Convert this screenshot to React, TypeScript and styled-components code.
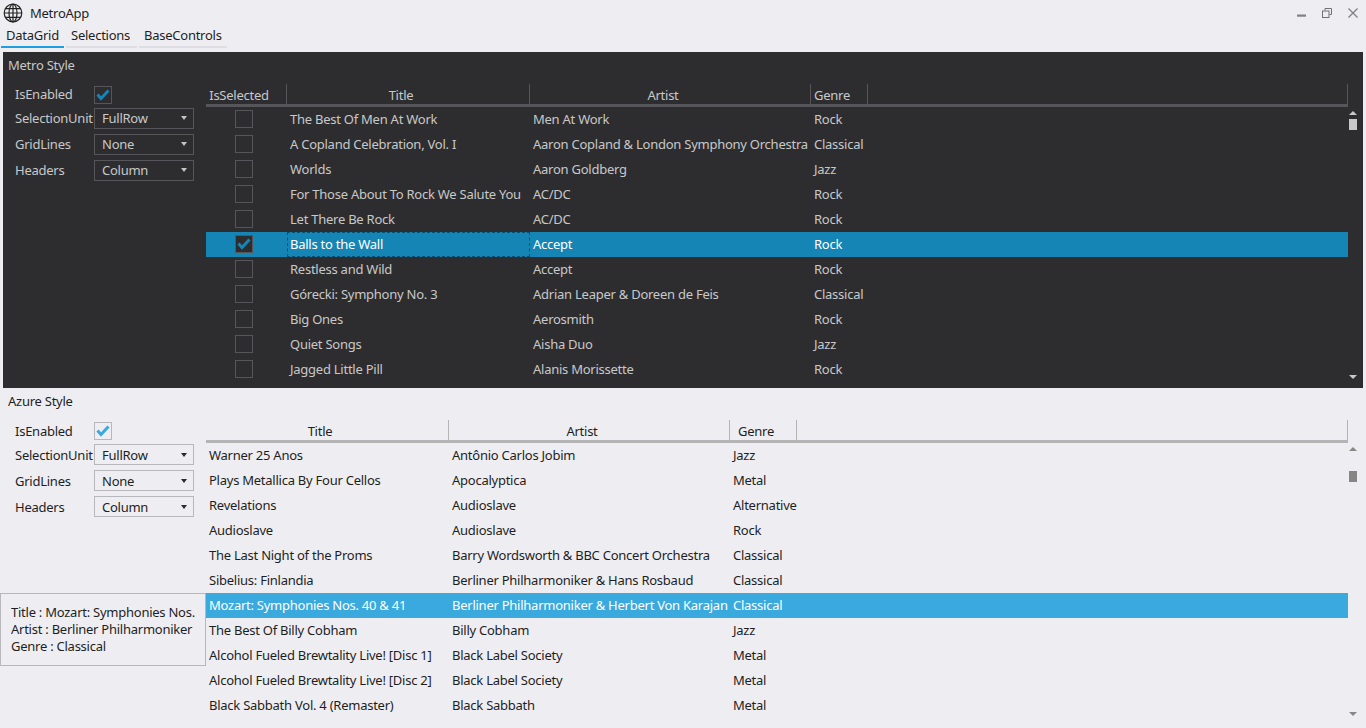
import React from "react";
import styled, { createGlobalStyle } from "styled-components";

const Global = createGlobalStyle`
  html, body { margin: 0; padding: 0; background: #eeeef2; }
  body { font-family: "Noto Sans", "Noto Sans CJK SC", sans-serif; font-size: 13px; letter-spacing: -0.25px; }
  * { box-sizing: border-box; }
`;

const Page = styled.div`
  width: 1366px; height: 728px; overflow: hidden; position: relative;
  background: #eeeef2; color: #1e1e1e; display: flex; flex-direction: column;
`;
const TitleBar = styled.div`height: 26px; display: flex; align-items: center; padding-left: 3px;`;
const AppName = styled.span`margin-left: 7px; line-height: 26px;`;
const WindowButtons = styled.div`margin-left: auto; display: flex; align-items: center; margin-right: 8px; gap: 16px;`;
const TabStrip = styled.div`height: 22px; display: flex; padding-left: 1px; gap: 2px;`;
const Tab = styled.div<{ $active?: boolean; $w: number }>`
  width: ${p => p.$w}px; height: 22px; padding-left: 5px; line-height: 18px;
  border-bottom: 2px solid ${p => (p.$active ? "#1ba1e2" : "#dddde3")};
`;
const Content = styled.div`flex: 1; padding: 4px 3px 0; display: flex; flex-direction: column; min-height: 0;`;
const Panel = styled.section<{ $dark?: boolean; $h: number }>`
  height: ${p => p.$h}px; flex: none; overflow: hidden; display: flex; flex-direction: column;
  background: ${p => (p.$dark ? "#2d2d30" : "#eeeef2")};
  color: ${p => (p.$dark ? "#c8c8c8" : "#1e1e1e")};
`;
const Heading = styled.div`height: 32px; padding-left: 5px; line-height: 27px; flex: none;`;
const Body = styled.div`flex: 1; display: flex; min-height: 0;`;
const Sidebar = styled.div`width: 203px; flex: none; padding: 2px 0 0 12px; display: flex; flex-direction: column;`;
const CheckRow = styled.div`display: flex; align-items: center; height: 18px; margin-bottom: 4px;`;
const FormRow = styled.div`display: flex; align-items: center; height: 21px; margin-bottom: 5px;`;
const Label = styled.label<{ $dark?: boolean }>`
  width: 79px; flex: none; white-space: nowrap; padding-bottom: ${p => (p.$dark ? 2 : 0)}px;
`;
const Box = styled.span<{ $dark?: boolean; $fill?: string }>`
  width: 18px; height: 18px; flex: none; display: inline-flex; align-items: center; justify-content: center;
  border: 1px solid ${p => (p.$dark ? "#55555a" : "#b8b8bc")};
  background: ${p => p.$fill ?? "transparent"};
`;
const Combo = styled.div<{ $dark?: boolean }>`
  width: 100px; height: 21px; display: flex; align-items: center; justify-content: space-between;
  padding: 0 6px ${p => (p.$dark ? 2 : 0)}px 7px; border: 1px solid ${p => (p.$dark ? "#55555a" : "#b8b8bc")};
`;
const Caret = styled.span<{ $dark?: boolean }>`
  width: 0; height: 0; border-left: 3.5px solid transparent; border-right: 3.5px solid transparent;
  border-top: 4px solid ${p => (p.$dark ? "#c4c4c4" : "#2a2a2a")};
`;
const Grid = styled.div`width: 1142px; flex: none; display: flex; flex-direction: column; min-height: 0; overflow: hidden;`;
const HeaderRow = styled.div<{ $dark?: boolean }>`
  height: 23px; flex: none; display: flex; border-bottom: 3px solid ${p => (p.$dark ? "#55555a" : "#b4b4b4")};
  border-right: 1px solid ${p => (p.$dark ? "#55555a" : "#b4b4b4")};
`;
const HeaderCell = styled.div<{ $w: number; $dark?: boolean }>`
  width: ${p => p.$w}px; flex: none; text-align: center;
  padding: 3px 14px 0 0; line-height: 16px; white-space: nowrap;
  border-right: 1px solid ${p => (p.$dark ? "#55555a" : "#b4b4b4")};
`;
const Row = styled.div<{ $sel?: string }>`
  height: 25px; flex: none; display: flex; align-items: center;
  background: ${p => p.$sel ?? "transparent"};
  color: ${p => (p.$sel ? "#fff" : "inherit")};
`;
const CheckCell = styled.div`width: 81px; height: 25px; flex: none; display: flex; justify-content: center; padding: 3px 6px 0 0;`;
const Cell = styled.div<{ $w: number; $focus?: boolean }>`
  width: ${p => p.$w}px; height: 25px; line-height: 24px; flex: none; padding-left: 3px; overflow: hidden; white-space: nowrap;
  outline: ${p => (p.$focus ? "1px dashed #0b4f70" : "none")}; outline-offset: -1px;
`;
const ScrollBar = styled.div`
  width: 11px; flex: none; margin-left: 1px; display: flex; flex-direction: column; align-items: flex-start;
  padding: 27px 0 9px;
`;
const Thumb = styled.div<{ $dark?: boolean; $top: number }>`
  width: 8px; height: 11px; margin-top: ${p => p.$top}px; background: ${p => (p.$dark ? "#c8c8c8" : "#868686")};
`;
const ArrowUp = styled.div<{ $dark?: boolean }>`
  width: 0; height: 0; border-left: 4px solid transparent; border-right: 4px solid transparent;
  border-bottom: 4px solid ${p => (p.$dark ? "#c8c8c8" : "#868686")};
`;
const ArrowDown = styled.div<{ $dark?: boolean }>`
  width: 0; height: 0; margin-top: auto; border-left: 4px solid transparent; border-right: 4px solid transparent;
  border-top: 4px solid ${p => (p.$dark ? "#c8c8c8" : "#868686")};
`;
const Tooltip = styled.div`
  position: absolute; left: 0; top: 593px; width: 206px; height: 73px; background: #eeeef2;
  border: 1px solid #b8b8bc; padding: 10px 10px 0; line-height: 17px;
`;
const TipLine = styled.div`white-space: nowrap; overflow: hidden;`;

const Check = ({ color }: { color: string }) => (
  <svg width="14" height="12" viewBox="0 0 14 12"><path d="M1.5 5.5 L5 9.5 L12.5 1.5" fill="none" stroke={color} strokeWidth="3" /></svg>
);
const Globe = () => (
  <svg width="20" height="20" viewBox="0 0 20 20" fill="none" stroke="#222" strokeWidth="1.2">
    <circle cx="10" cy="10" r="8.8" /><ellipse cx="10" cy="10" rx="4" ry="8.8" />
    <path d="M10 1.2V18.8M1.2 10H18.8M2.4 5.6H17.6M2.4 14.4H17.6" />
  </svg>
);
const WinMin = () => <svg width="9" height="10" viewBox="0 0 9 10"><rect x="0" y="6.5" width="9" height="2.2" fill="#808084" /></svg>;
const WinRestore = () => (
  <svg width="10" height="10" viewBox="0 0 10 10" fill="none" stroke="#707074"><path d="M3 2.5V.5H9.5V6.5H7.5" /><rect x=".5" y="3" width="6.5" height="6.5" /></svg>
);
const WinClose = () => <svg width="10" height="10" viewBox="0 0 10 10" stroke="#808084" strokeWidth="1.3"><path d="M.5 .5L9.5 9.5M9.5 .5L.5 9.5" /></svg>;

type Album = [string, string, string];
const metro: Album[] = [
  ["The Best Of Men At Work", "Men At Work", "Rock"],
  ["A Copland Celebration, Vol. I", "Aaron Copland & London Symphony Orchestra", "Classical"],
  ["Worlds", "Aaron Goldberg", "Jazz"],
  ["For Those About To Rock We Salute You", "AC/DC", "Rock"],
  ["Let There Be Rock", "AC/DC", "Rock"],
  ["Balls to the Wall", "Accept", "Rock"],
  ["Restless and Wild", "Accept", "Rock"],
  ["Górecki: Symphony No. 3", "Adrian Leaper & Doreen de Feis", "Classical"],
  ["Big Ones", "Aerosmith", "Rock"],
  ["Quiet Songs", "Aisha Duo", "Jazz"],
  ["Jagged Little Pill", "Alanis Morissette", "Rock"],
];
const azure: Album[] = [
  ["Warner 25 Anos", "Antônio Carlos Jobim", "Jazz"],
  ["Plays Metallica By Four Cellos", "Apocalyptica", "Metal"],
  ["Revelations", "Audioslave", "Alternative"],
  ["Audioslave", "Audioslave", "Rock"],
  ["The Last Night of the Proms", "Barry Wordsworth & BBC Concert Orchestra", "Classical"],
  ["Sibelius: Finlandia", "Berliner Philharmoniker & Hans Rosbaud", "Classical"],
  ["Mozart: Symphonies Nos. 40 & 41", "Berliner Philharmoniker & Herbert Von Karajan", "Classical"],
  ["The Best Of Billy Cobham", "Billy Cobham", "Jazz"],
  ["Alcohol Fueled Brewtality Live! [Disc 1]", "Black Label Society", "Metal"],
  ["Alcohol Fueled Brewtality Live! [Disc 2]", "Black Label Society", "Metal"],
  ["Black Sabbath Vol. 4 (Remaster)", "Black Sabbath", "Metal"],
];

const Form = ({ dark }: { dark?: boolean }) => (
  <Sidebar>
    <CheckRow>
      <Label $dark={dark}>IsEnabled</Label>
      <Box $dark={dark}><Check color={dark ? "#1585b5" : "#3aa9de"} /></Box>
    </CheckRow>
    {[["SelectionUnit", "FullRow"], ["GridLines", "None"], ["Headers", "Column"]].map(([l, v]) => (
      <FormRow key={l}>
        <Label $dark={dark}>{l}</Label>
        <Combo $dark={dark}>{v}<Caret $dark={dark} /></Combo>
      </FormRow>
    ))}
  </Sidebar>
);

export default function App() {
  return (
    <Page>
      <Global />
      <TitleBar>
        <Globe />
        <AppName>MetroApp</AppName>
        <WindowButtons>
          <WinMin /><WinRestore /><WinClose />
        </WindowButtons>
      </TitleBar>
      <TabStrip>
        <Tab $active $w={63}>DataGrid</Tab>
        <Tab $w={71}>Selections</Tab>
        <Tab $w={88}>BaseControls</Tab>
      </TabStrip>
      <Content>
        <Panel $dark $h={336}>
          <Heading>Metro Style</Heading>
          <Body>
            <Form dark />
            <Grid>
              <HeaderRow $dark>
                <HeaderCell $dark $w={81}>IsSelected</HeaderCell>
                <HeaderCell $dark $w={243}>Title</HeaderCell>
                <HeaderCell $dark $w={281}>Artist</HeaderCell>
                <HeaderCell $dark $w={57}>Genre</HeaderCell>
              </HeaderRow>
              {metro.map((r, i) => (
                <Row key={r[0]} $sel={i === 5 ? "#1585b5" : undefined}>
                  <CheckCell>
                    <Box $dark $fill={i === 5 ? "#2d2d30" : undefined}>{i === 5 && <Check color="#1585b5" />}</Box>
                  </CheckCell>
                  <Cell $w={243} $focus={i === 5}>{r[0]}</Cell>
                  <Cell $w={281}>{r[1]}</Cell>
                  <Cell $w={120}>{r[2]}</Cell>
                </Row>
              ))}
            </Grid>
            <ScrollBar>
              <ArrowUp $dark />
              <Thumb $dark $top={4} />
              <ArrowDown $dark />
            </ScrollBar>
          </Body>
        </Panel>
        <Panel $h={337}>
          <Heading>Azure Style</Heading>
          <Body>
            <Form />
            <Grid>
              <HeaderRow>
                <HeaderCell $w={243}>Title</HeaderCell>
                <HeaderCell $w={281}>Artist</HeaderCell>
                <HeaderCell $w={67}>Genre</HeaderCell>
              </HeaderRow>
              {azure.map((r, i) => (
                <Row key={r[0]} $sel={i === 6 ? "#3aa9de" : undefined}>
                  <Cell $w={243}>{r[0]}</Cell>
                  <Cell $w={281}>{r[1]}</Cell>
                  <Cell $w={120}>{r[2]}</Cell>
                </Row>
              ))}
            </Grid>
            <ScrollBar>
              <ArrowUp />
              <Thumb $top={20} />
              <ArrowDown />
            </ScrollBar>
          </Body>
        </Panel>
      </Content>
      <Tooltip>
        <TipLine>Title : Mozart: Symphonies Nos. 40 &amp; 41</TipLine>
        <TipLine>Artist : Berliner Philharmoniker &amp; Herbert Von Karajan</TipLine>
        <TipLine>Genre : Classical</TipLine>
      </Tooltip>
    </Page>
  );
}
